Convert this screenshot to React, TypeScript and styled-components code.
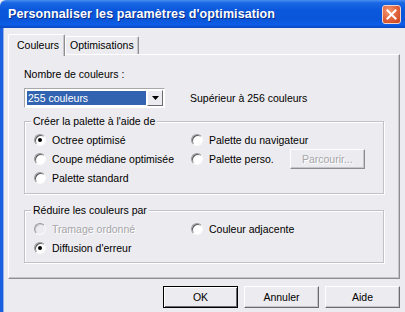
import styled, { createGlobalStyle } from "styled-components"

const GlobalStyle = createGlobalStyle`
    html, body {
        margin: 0;
        padding: 0;
        background: #ecebef;
    }
    body {
        font-family: "Liberation Sans", Arial, sans-serif;
        font-size: 10.5px;
        color: #000;
    }
`

type RadioProps = { checked?: boolean, disabled?: boolean }

function Radio ({ label, checked, disabled }: RadioProps & { label: string }) {
    return <RadioRow>
        <RadioDot checked={checked} disabled={disabled}/>
        <RadioLabel disabled={disabled}>{label}</RadioLabel>
    </RadioRow>
}

export default function App () {
    return <Window>
        <GlobalStyle/>
        <TitleBar>
            <Title>Personnaliser les paramètres d'optimisation</Title>
            <CloseButton>
                <svg width="11" height="11" viewBox="0 0 11 11">
                    <path d="M1.5 1.5 L9.5 9.5 M9.5 1.5 L1.5 9.5" stroke="#fff" strokeWidth="2" strokeLinecap="square"/>
                </svg>
            </CloseButton>
        </TitleBar>
        <Body>
            <TabStrip>
                <Tab active>Couleurs</Tab>
                <Tab>Optimisations</Tab>
            </TabStrip>
            <Panel>
                <FieldLabel>Nombre de couleurs :</FieldLabel>
                <SelectRow>
                    <Select>
                        <SelectValue>255 couleurs</SelectValue>
                        <ArrowButton>
                            <svg width="7" height="4" viewBox="0 0 7 4">
                                <path d="M0 0 H7 L3.5 4 Z" fill="#000"/>
                            </svg>
                        </ArrowButton>
                    </Select>
                    <Hint>Supérieur à 256 couleurs</Hint>
                </SelectRow>
                <Group top={13} height={73}>
                    <Legend>Créer la palette à l'aide de</Legend>
                    <RadioGrid>
                        <Radio label="Octree optimisé" checked/>
                        <Radio label="Palette du navigateur"/>
                        <Radio label="Coupe médiane optimisée"/>
                        <RadioRow>
                            <RadioDot/>
                            <RadioLabel>Palette perso.</RadioLabel>
                            <Button disabled>Parcourir...</Button>
                        </RadioRow>
                        <Radio label="Palette standard"/>
                    </RadioGrid>
                </Group>
                <Group top={16} height={53}>
                    <Legend>Réduire les couleurs par</Legend>
                    <RadioGrid>
                        <Radio label="Tramage ordonné" disabled/>
                        <Radio label="Couleur adjacente"/>
                        <Radio label="Diffusion d'erreur" checked/>
                    </RadioGrid>
                </Group>
            </Panel>
            <ButtonBar>
                <DialogButton primary>OK</DialogButton>
                <DialogButton>Annuler</DialogButton>
                <DialogButton>Aide</DialogButton>
            </ButtonBar>
        </Body>
    </Window>
}

const Window = styled.div`
    width: 405px;
    height: 312px;
    display: flex;
    flex-direction: column;
    overflow: hidden;
    background: #ecebef;
`

const TitleBar = styled.div`
    height: 28px;
    flex-shrink: 0;
    display: flex;
    align-items: center;
    justify-content: space-between;
    padding: 0 4px 0 8px;
    background: linear-gradient(#4a8ef0 0%, #1a68e4 10%, #0b58dc 35%, #0a56db 70%, #0d5ee6 88%, #0846c0 100%);
    border-top-left-radius: 6px;
`

const Title = styled.div`
    color: #fff;
    font-family: "Liberation Sans", Arial, sans-serif;
    font-weight: bold;
    font-size: 12.5px;
    letter-spacing: 0.1px;
    text-shadow: 1px 1px 0 #0b2a86;
    white-space: nowrap;
`

const CloseButton = styled.div`
    width: 19px;
    height: 19px;
    box-sizing: border-box;
    display: flex;
    align-items: center;
    justify-content: center;
    border: 1px solid #f2d4c8;
    border-radius: 3px;
    background: radial-gradient(circle at 35% 30%, #f39a72 0%, #e0603a 55%, #c8401c 100%);
`

const Body = styled.div`
    flex: 1;
    display: flex;
    flex-direction: column;
    padding: 6px 5px 0 5px;
    border-left: 3px solid #1a5fdf;
    box-shadow: inset 1px 0 0 #8fb0ec;
`

const TabStrip = styled.div`
    display: flex;
    align-items: flex-end;
    height: 20px;
`

const Tab = styled.div<{ active?: boolean }>`
    box-sizing: border-box;
    height: ${p => p.active ? 22 : 18}px;
    margin-bottom: ${p => p.active ? -2 : 0}px;
    padding: ${p => p.active ? "4px 5px 0 8px" : "2px 4px 0 4px"};
    background: #ecebef;
    border-top: 1px solid #fff;
    border-left: 1px solid #fff;
    border-right: 1px solid #8e8d92;
    box-shadow: inset -1px 0 0 #c6c5ca;
    border-radius: 2px 2px 0 0;
    position: relative;
    z-index: ${p => p.active ? 1 : 0};
    white-space: nowrap;
`

const Panel = styled.div`
    height: 225px;
    box-sizing: border-box;
    padding: 13px 14px 0 15px;
    border: 1px solid;
    border-color: #fff #8e8d92 #8e8d92 #fff;
    box-shadow: inset -1px -1px 0 #c6c5ca;
    display: flex;
    flex-direction: column;
`

const FieldLabel = styled.div`
    line-height: 13px;
    height: 13px;
`

const SelectRow = styled.div`
    display: flex;
    align-items: center;
    margin-top: 7px;
    height: 20px;
`

const Select = styled.div`
    width: 141px;
    height: 20px;
    box-sizing: border-box;
    display: flex;
    padding: 1px;
    background: #fff;
    border: 1px solid;
    border-color: #a8a7ac #fff #fff #a8a7ac;
`

const SelectValue = styled.div`
    flex: 1;
    background: #3163b0;
    color: #fff;
    line-height: 16px;
    padding-left: 2px;
    box-shadow: 0 0 0 1px #fff inset;
`

const ArrowButton = styled.div`
    width: 16px;
    box-sizing: border-box;
    display: flex;
    align-items: center;
    justify-content: center;
    background: #ecebef;
    border: 1px solid;
    border-color: #fff #6b6a6f #6b6a6f #fff;
`

const Hint = styled.div`
    margin-left: 25px;
`

const Group = styled.div<{ top: number, height: number }>`
    position: relative;
    width: 360px;
    height: ${p => p.height}px;
    box-sizing: border-box;
    margin-top: ${p => p.top}px;
    border: 1px solid #c2c1c6;
    box-shadow: 1px 1px 0 #fff, inset 1px 1px 0 #fff;
    padding: 8px 0 0 9px;
`

const Legend = styled.span`
    position: absolute;
    top: -7px;
    left: 6px;
    padding: 0 2px;
    line-height: 13px;
    background: #ecebef;
`

const RadioGrid = styled.div`
    display: grid;
    grid-template-columns: 157px 1fr;
    grid-auto-rows: 19px;
    align-items: center;
`

const RadioRow = styled.div`
    display: flex;
    align-items: center;
    height: 19px;
`

const RadioDot = styled.span<RadioProps>`
    width: 12px;
    height: 12px;
    box-sizing: border-box;
    border-radius: 50%;
    border: 1px solid;
    border-color: #9a999e #fafafa #fafafa #9a999e;
    background: ${p => p.disabled ? "#ecebef" : "#fff"};
    box-shadow: inset 1px 1px 0 ${p => p.disabled ? "#c9c8cc" : "#5a5a5e"};
    display: flex;
    align-items: center;
    justify-content: center;
    flex-shrink: 0;
    &::after {
        content: "";
        width: 4px;
        height: 4px;
        border-radius: 50%;
        background: #000;
        display: ${p => p.checked ? "block" : "none"};
    }
`

const RadioLabel = styled.span<{ disabled?: boolean }>`
    margin-left: 6px;
    color: ${p => p.disabled ? "#a6a5aa" : "#000"};
    text-shadow: ${p => p.disabled ? "1px 1px 0 #fff" : "none"};
    white-space: nowrap;
`

const Button = styled.div<{ disabled?: boolean }>`
    width: 75px;
    height: 20px;
    box-sizing: border-box;
    margin-left: 16px;
    display: flex;
    align-items: center;
    justify-content: center;
    border: 1px solid;
    border-color: #fff #8e8d92 #8e8d92 #fff;
    box-shadow: inset -1px -1px 0 #c6c5ca;
    color: ${p => p.disabled ? "#a6a5aa" : "#000"};
    text-shadow: ${p => p.disabled ? "1px 1px 0 #fff" : "none"};
`

const ButtonBar = styled.div`
    display: flex;
    justify-content: flex-end;
    gap: 6px;
    margin-top: 7px;
`

const DialogButton = styled.div<{ primary?: boolean }>`
    width: 75px;
    height: 22px;
    box-sizing: border-box;
    display: flex;
    align-items: center;
    justify-content: center;
    border: 1px solid;
    border-color: ${p => p.primary ? "#000" : "#fff #6b6a6f #6b6a6f #fff"};
    box-shadow: ${p => p.primary
        ? "inset 1px 1px 0 #fff, inset -1px -1px 0 #6b6a6f"
        : "inset -1px -1px 0 #c6c5ca"};
`
